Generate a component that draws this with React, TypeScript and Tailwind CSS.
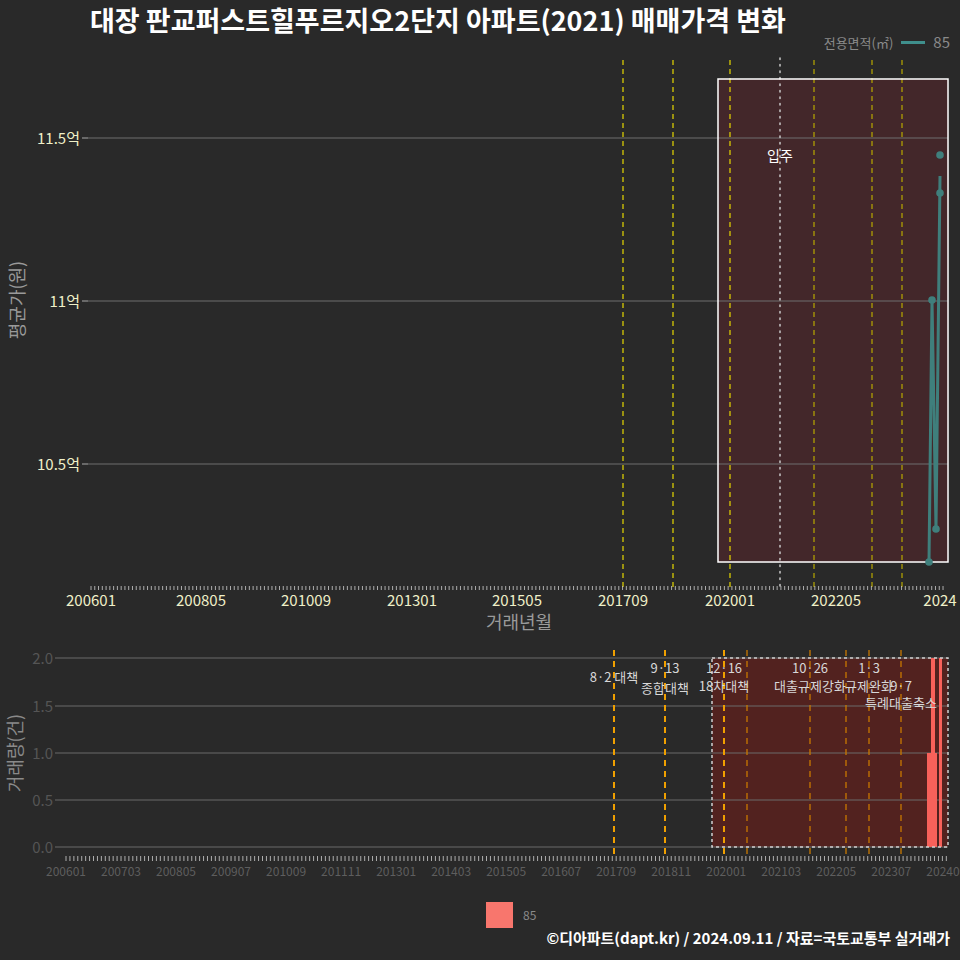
import React from "react";

const F = "'Noto Sans CJK KR','Noto Sans',sans-serif";

function MainChart() {
  const ticks: JSX.Element[] = [];
  for (let i = 0; i <= 226; i++) {
    const x = 91 + i * 3.77;
    ticks.push(<line key={i} x1={x} x2={x} y1={586} y2={590} stroke="#cfcfcf" strokeWidth={0.8} />);
  }
  const labels = ["200601", "200805", "201009", "201301", "201505", "201709", "202001", "202205", "2024"];
  const lx = [91, 201, 306, 412, 517, 623, 730, 836, 940];
  const yel = [623, 673, 730, 814, 872, 902];
  return (
    <svg width={960} height={584} viewBox="0 56 960 584" style={{ fontFamily: F }} className="block">
      <rect x={718} y={79} width={230} height={483} fill="#43272a" />
      {[138, 301, 464].map((y) => (
        <line key={y} x1={88} x2={948} y1={y} y2={y} stroke="#6e6e6e" strokeWidth={1} />
      ))}
      {[["11.5억", 138], ["11억", 301], ["10.5억", 464]].map(([t, y]) => (
        <g key={t as string}>
          <text x={80} y={(y as number) + 6} textAnchor="end" fill="#f0f0c8" fontSize={15}>{t}</text>
          <line x1={82} x2={88} y1={y as number} y2={y as number} stroke="#aaa" />
        </g>
      ))}
      {yel.map((x, i) => (
        <line key={x} x1={x} x2={x} y1={60} y2={588} stroke={i < 3 ? "#e6d800" : "#b8a800"} strokeWidth={1.2} strokeDasharray="5 4" />
      ))}
      <line x1={780} x2={780} y1={58} y2={588} stroke="#cccccc" strokeWidth={1.5} strokeDasharray="1.5 5" strokeLinecap="round" />
      <rect x={718} y={79} width={230} height={483} fill="none" stroke="#ffffff" strokeWidth={1.5} />
      <text x={780} y={161} textAnchor="middle" fill="#ffffff" fontSize={14}>입주</text>
      <polyline points="929,562 932,300 936,529 940,176" fill="none" stroke="#3f7f7c" strokeWidth={3} />
      {[[929, 562], [932, 300], [936, 529], [940, 193], [940, 155]].map(([x, y], i) => (
        <circle key={i} cx={x} cy={y} r={3.8} fill="#3f7f7c" />
      ))}
      {ticks}
      {labels.map((l, i) => (
        <text key={l} x={lx[i]} y={606} textAnchor="middle" fill="#f0f0c8" fontSize={15}>{l}</text>
      ))}
      <text x={519} y={629} textAnchor="middle" fill="#9a9a9a" fontSize={18}>거래년월</text>
      <text transform="translate(24,300) rotate(-90)" textAnchor="middle" fill="#9a9a9a" fontSize={18}>평균가(원)</text>
    </svg>
  );
}

function VolChart() {
  const ticks: JSX.Element[] = [];
  for (let i = 0; i <= 224; i++) {
    const x = 66 + i * 3.93;
    ticks.push(<line key={i} x1={x} x2={x} y1={856} y2={861} stroke="#d0d0d0" strokeWidth={0.8} />);
  }
  const labels: JSX.Element[] = [];
  const names = ["200601","200703","200805","200907","201009","201111","201301","201403","201505","201607","201709","201811","202001","202103","202205","202307","202409"];
  names.forEach((n, i) => {
    labels.push(<text key={n} x={66 + i * 14 * 3.93} y={876} textAnchor="middle" fill="#5e5e5e" fontSize={12}>{n}</text>);
  });
  const org = [614, 665, 724, 747, 810, 846, 869, 901];
  return (
    <svg width={960} height={245} viewBox="0 640 960 245" style={{ fontFamily: F }} className="block">
      <rect x={712} y={658} width={236} height={189} fill="#52221f" />
      {[[658, "2.0"], [706, "1.5"], [753, "1.0"], [800, "0.5"], [847, "0.0"]].map(([y, t]) => (
        <g key={t as string}>
          <line x1={60} x2={948} y1={y as number} y2={y as number} stroke="#6a6a6a" />
          <line x1={55} x2={60} y1={y as number} y2={y as number} stroke="#6a6a6a" />
          <text x={53} y={(y as number) + 6} textAnchor="end" fill="#555" fontSize={15}>{t}</text>
        </g>
      ))}
      {org.map((x, i) => (
        <line key={x} x1={x} x2={x} y1={650} y2={856} stroke={[0, 1, 2].includes(i) ? "#f0a000" : "#c87800"} strokeWidth={i < 3 ? 2 : 1.3} strokeDasharray="6 5" />
      ))}
      <rect x={927} y={753} width={10} height={94} fill="#f8615a" />
      <rect x={931} y={658} width={4} height={189} fill="#f8615a" />
      <rect x={939} y={658} width={3} height={189} fill="#f8615a" />
      <rect x={712} y={658} width={236} height={189} fill="none" stroke="#cfcfcf" strokeWidth={1.5} strokeDasharray="3 3" />
      <g fill="#d8d8d8" fontSize={13}>
        <text x={614} y={682} textAnchor="middle">8·2 대책</text>
        <text x={665} y={673} textAnchor="middle">9·13</text>
        <text x={665} y={693} textAnchor="middle">종합대책</text>
        <text x={724} y={673} textAnchor="middle">12·16</text>
        <text x={724} y={691} textAnchor="middle">18차대책</text>
        <text x={810} y={673} textAnchor="middle">10·26</text>
        <text x={810} y={691} textAnchor="middle">대출규제강화</text>
        <text x={869} y={673} textAnchor="middle">1·3</text>
        <text x={869} y={691} textAnchor="middle">규제완화</text>
        <text x={901} y={691} textAnchor="middle">9·7</text>
        <text x={901} y={708} textAnchor="middle">특례대출축소</text>
      </g>
      {ticks}
      {labels}
      <text transform="translate(22,753) rotate(-90)" textAnchor="middle" fill="#8a8a8a" fontSize={18}>거래량(건)</text>
    </svg>
  );
}

export default function App() {
  return (
    <div className="w-[960px] h-[960px] bg-[#292929] overflow-hidden" style={{ fontFamily: F }}>
      <div className="h-[56px] relative">
        <div className="pl-[90px] pt-[1px] text-[27px] font-bold text-white leading-[38px] whitespace-nowrap">대장 판교퍼스트힐푸르지오2단지 아파트(2021) 매매가격 변화</div>
        <div className="absolute right-[10px] top-[31px] flex items-center gap-[8px]">
          <span className="text-[13px] text-[#8a8a8a]">전용면적(㎡)</span>
          <span className="w-[24px] h-[3px] bg-[#3f8f8c]"></span>
          <span className="text-[15px] text-[#8a8a8a]">85</span>
        </div>
      </div>
      <MainChart />
      <VolChart />
      <div className="flex items-center gap-[10px] pt-[17px] pl-[486px]">
        <span className="w-[27px] h-[26px] bg-[#f8766d]"></span>
        <span className="text-[12px] text-[#8a8a8a]">85</span>
      </div>
      <div className="text-right pr-[10px] text-[15px] font-bold text-white leading-[20px] whitespace-nowrap">©디아파트(dapt.kr) / 2024.09.11 / 자료=국토교통부 실거래가</div>
    </div>
  );
}
